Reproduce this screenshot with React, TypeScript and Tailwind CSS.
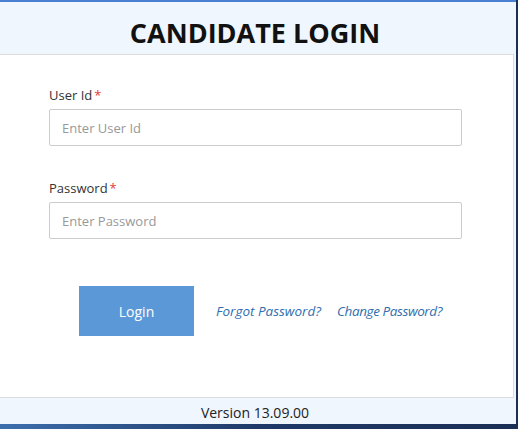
import React from "react";

export default function App() {
  return (
    <div
      className="w-[518px] h-[429px] bg-gradient-to-r from-[#3d6fae] via-[#1f3a68] to-[#1b2f55] overflow-hidden"
      style={{ fontFamily: '"Open Sans", "Noto Sans", sans-serif' }}
    >
      <div className="w-[516px] h-[424px] bg-[#eff6fd] border-t-2 border-[#4a80d2] flex flex-col">
        <div className="h-[52px] pt-[17px] pr-[6px] text-center">
          <h1 className="text-[27px] leading-[28px] font-bold text-[#111]">CANDIDATE LOGIN</h1>
        </div>
        <div className="w-[514px] h-[344px] bg-white border-t border-b border-r border-[#dddddd] pt-[30px] pl-[49px]">
          <label className="block text-[13px] leading-[20px] text-[#333]">
            User Id<span className="text-[#e53935] ml-[2px]">*</span>
          </label>
          <input
            className="mt-[4px] block w-[413px] h-[37px] border border-[#cccccc] rounded-[2px] pl-3 text-[13px] text-[#333] placeholder:text-[#999] outline-none"
            placeholder="Enter User Id"
          />
          <label className="mt-[32px] block text-[13px] leading-[20px] text-[#333]">
            Password<span className="text-[#e53935] ml-[2px]">*</span>
          </label>
          <input
            type="password"
            className="mt-[4px] block w-[413px] h-[37px] border border-[#cccccc] rounded-[2px] pl-3 text-[13px] text-[#333] placeholder:text-[#999] outline-none"
            placeholder="Enter Password"
          />
          <div className="mt-[47px] ml-[30px] flex items-center">
            <button className="w-[115px] h-[50px] bg-[#5b98d8] text-white text-[14px]">Login</button>
            <a className="ml-[22px] text-[13.5px] leading-[20px] italic text-[#2f6fae] cursor-pointer">Forgot Password?</a>
            <a className="ml-[16px] text-[13.5px] leading-[20px] tracking-[-0.4px] italic text-[#2f6fae] cursor-pointer">Change Password?</a>
          </div>
        </div>
        <div className="flex-1 pt-[5px] pr-[6px] text-center text-[14px] leading-[20px] text-[#222]">Version 13.09.00</div>
      </div>
    </div>
  );
}
